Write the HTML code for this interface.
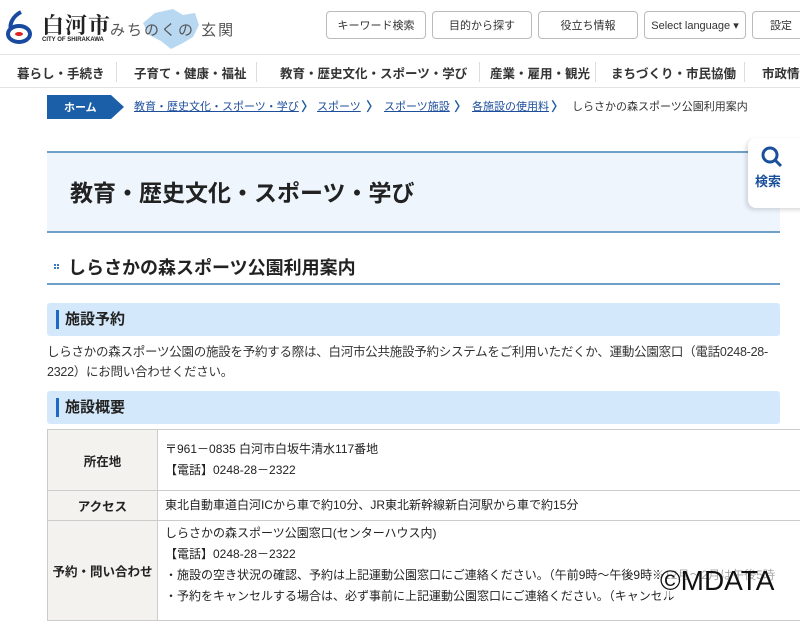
<!DOCTYPE html>
<html><head><meta charset="utf-8"><style>
*{margin:0;padding:0;box-sizing:border-box}
body{width:800px;height:600px;overflow:hidden;background:#fff;font-family:"Liberation Sans","Noto Sans CJK JP",sans-serif;color:#222;position:relative}
.abs{position:absolute}
.btn{position:absolute;top:11px;height:28px;border:1px solid #bbb;border-radius:4px;font-size:11px;display:flex;align-items:center;justify-content:center;color:#333;background:#fff}
.nav{position:absolute;top:54px;left:0;width:800px;height:34px;border-top:1px solid #e3e3e3;border-bottom:1px solid #e3e3e3}
.nav span{position:absolute;top:8px;font-size:12.5px;font-weight:bold;color:#333;white-space:nowrap}
.sep{position:absolute;top:7px;width:1px;height:20px;background:#ddd}
.bc{position:absolute;top:98px;font-size:11px;color:#1e4f9c;text-decoration:underline;white-space:nowrap}
.chev{position:absolute;top:96px;font-size:13px;color:#1e5aa0;font-weight:bold}
.h3{position:absolute;left:47px;width:733px;height:33px;background:#d4e8fb;border-radius:3px}
.h3 b{position:absolute;left:9px;top:7px;border-left:3px solid #1e6ac0;padding-left:6px;font-size:15px;line-height:19px}
td{border:1px solid #ccc;font-size:12px;vertical-align:middle}
td.l{background:#f3f2ee;text-align:center;font-weight:bold;width:110px;font-size:12.5px}
td.r{padding:2px 7px;line-height:21px;white-space:nowrap}
</style></head><body>
<svg class="abs" style="left:5px;top:10px" width="28" height="34" viewBox="0 0 28 34"><path d="M16 2 C8 6 4 14 6 20" stroke="#1a4aa0" stroke-width="4" fill="none"/><ellipse cx="14" cy="24" rx="11" ry="8" fill="none" stroke="#1a4aa0" stroke-width="4"/><ellipse cx="14" cy="24" rx="4" ry="2" fill="#d22"/></svg>
<div class="abs" style="left:42px;top:9px;font-size:22px;font-weight:bold;font-family:'Noto Serif CJK SC',serif;color:#222;letter-spacing:1px">白河市</div>
<div class="abs" style="left:42px;top:37px;font-size:6px;font-weight:bold">CITY OF SHIRAKAWA</div>
<svg class="abs" style="left:135px;top:5px" width="80" height="46"><path d="M20 8 L38 4 L48 10 L60 8 L64 20 L58 32 L48 38 L36 44 L26 36 L14 30 L8 18 Z" fill="#b8d8f2"/></svg>
<div class="abs" style="left:110px;top:19px;font-size:15px;color:#555;letter-spacing:2px">みちのくの 玄関</div>
<div class="btn" style="left:326px;width:100px">キーワード検索</div>
<div class="btn" style="left:432px;width:100px">目的から探す</div>
<div class="btn" style="left:538px;width:100px">役立ち情報</div>
<div class="btn" style="left:644px;width:102px">Select language ▾</div>
<div class="btn" style="left:752px;width:60px;justify-content:flex-start;padding-left:17px">設定</div>
<div class="nav">
<span style="left:17px">暮らし・手続き</span><div class="sep" style="left:116px"></div>
<span style="left:134px">子育て・健康・福祉</span><div class="sep" style="left:256px"></div>
<span style="left:280px">教育・歴史文化・スポーツ・学び</span><div class="sep" style="left:479px"></div>
<span style="left:490px">産業・雇用・観光</span><div class="sep" style="left:595px"></div>
<span style="left:611px">まちづくり・市民協働</span><div class="sep" style="left:744px"></div>
<span style="left:762px">市政情報</span>
</div>
<svg class="abs" style="left:47px;top:95px" width="78" height="24"><path d="M0 0 H64 L77 12 L64 24 H0 Z" fill="#1a5fa8"/><text x="17" y="16" fill="#fff" font-size="11" font-weight="bold" font-family="Noto Sans CJK JP">ホーム</text></svg>
<span class="bc" style="left:134px">教育・歴史文化・スポーツ・学び</span><span class="chev" style="left:301px">〉</span>
<span class="bc" style="left:317px">スポーツ</span><span class="chev" style="left:366px">〉</span>
<span class="bc" style="left:384px">スポーツ施設</span><span class="chev" style="left:454px">〉</span>
<span class="bc" style="left:472px">各施設の使用料</span><span class="chev" style="left:551px">〉</span>
<span class="bc" style="left:572px;color:#333;text-decoration:none">しらさかの森スポーツ公園利用案内</span>
<div class="abs" style="left:47px;top:151px;width:733px;height:82px;background:#eef5fc;border-top:2px solid #6fa0c8;border-bottom:2px solid #6fa0c8"></div>
<div class="abs" style="left:70px;top:174px;font-size:23px;font-weight:bold">教育・歴史文化・スポーツ・学び</div>
<div class="abs" style="left:748px;top:138px;width:60px;height:70px;background:#fff;border-radius:8px 0 0 8px;box-shadow:-2px 2px 4px rgba(0,0,0,.15)"></div>
<svg class="abs" style="left:760px;top:145px" width="24" height="24"><circle cx="10" cy="10" r="7" stroke="#1a4f9c" stroke-width="3" fill="none"/><path d="M15 15 L21 21" stroke="#1a4f9c" stroke-width="3"/></svg>
<div class="abs" style="left:755px;top:171px;font-size:13px;font-weight:bold;color:#1a4f9c">検索</div>
<div class="abs" style="left:54px;top:264px;width:5px;height:5px;border:2px dotted #3a7ac0"></div>
<div class="abs" style="left:68px;top:254px;font-size:18px;font-weight:bold">しらさかの森スポーツ公園利用案内</div>
<div class="abs" style="left:47px;top:283px;width:733px;height:2px;background:#6fa0c8"></div>
<div class="h3" style="top:303px"><b>施設予約</b></div>
<div class="abs" style="left:47px;top:342px;width:735px;font-size:12.5px;line-height:20px;color:#333;letter-spacing:-0.25px">しらさかの森スポーツ公園の施設を予約する際は、白河市公共施設予約システムをご利用いただくか、運動公園窓口（電話0248-28-2322）にお問い合わせください。</div>
<div class="h3" style="top:391px"><b>施設概要</b></div>
<table class="abs" style="left:47px;top:429px;width:760px;border-collapse:collapse">
<tr style="height:61px"><td class="l">所在地</td><td class="r">〒961－0835 白河市白坂牛清水117番地<br>【電話】0248-28－2322</td></tr>
<tr style="height:30px"><td class="l">アクセス</td><td class="r">東北自動車道白河ICから車で約10分、JR東北新幹線新白河駅から車で約15分</td></tr>
<tr style="height:100px"><td class="l">予約・問い合わせ</td><td class="r" style="vertical-align:top">しらさかの森スポーツ公園窓口(センターハウス内)<br>【電話】0248-28－2322<br>・施設の空き状況の確認、予約は上記運動公園窓口にご連絡ください。（午前9時～午後9時※12月～2月は午後5時<br>・予約をキャンセルする場合は、必ず事前に上記運動公園窓口にご連絡ください。（キャンセル</td></tr>
</table>
<div class="abs" style="left:660px;top:565px;font-size:28px;color:#111;background:rgba(255,255,255,.6)">©MDATA</div>
</body></html>
